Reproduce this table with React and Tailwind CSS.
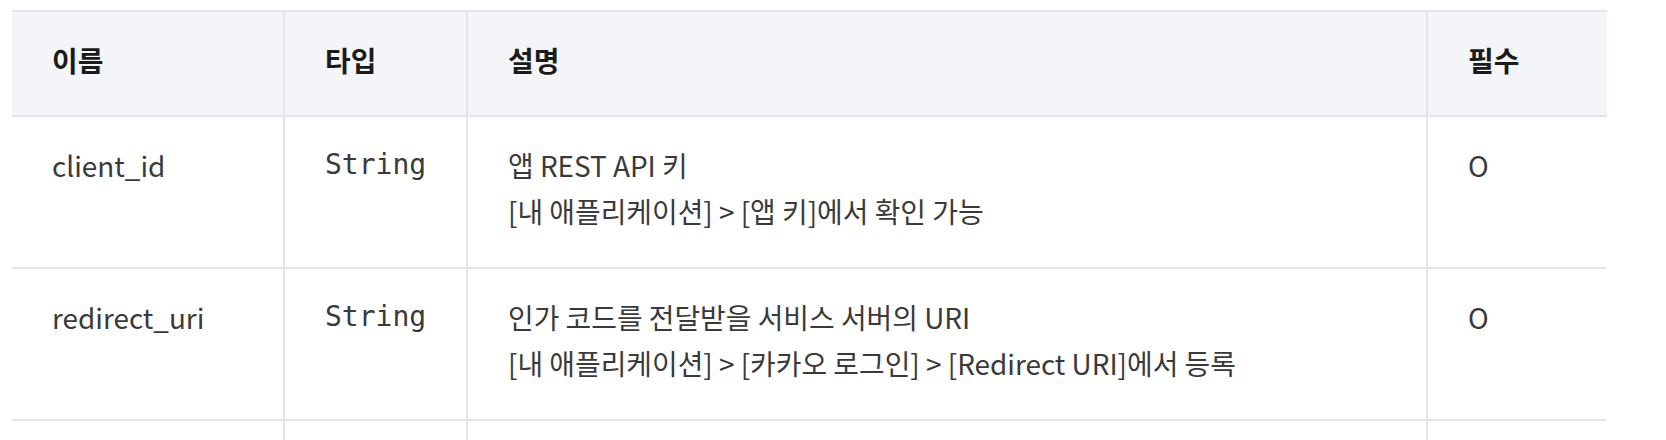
const rows = [
  {
    name: 'client_id',
    type: 'String',
    desc: ['앱 REST API 키', '[내 애플리케이션] > [앱 키]에서 확인 가능'],
    required: 'O',
  },
  {
    name: 'redirect_uri',
    type: 'String',
    desc: ['인가 코드를 전달받을 서비스 서버의 URI', '[내 애플리케이션] > [카카오 로그인] > [Redirect URI]에서 등록'],
    required: 'O',
  },
];

export default function App() {
  return (
    <div className="h-[440px] overflow-hidden bg-white pl-[12px] pt-[10px] font-['Noto_Sans_CJK_KR',sans-serif]">
      <table className="w-[1595px] table-fixed border-collapse text-left text-[27.9px] leading-[46px]">
        <colgroup>
          <col className="w-[272px]" />
          <col className="w-[183px]" />
          <col className="w-[960px]" />
          <col className="w-[180px]" />
        </colgroup>
        <thead>
          <tr className="border-y-2 border-[#e3e5e9] bg-[#f4f5f8]">
            <th className="px-[40px] pt-[25px] pb-[32px] font-bold text-[#1b1b1b]">이름</th>
            <th className="border-l-2 border-[#e3e5e9] px-[40px] pt-[25px] pb-[32px] font-bold text-[#1b1b1b]">타입</th>
            <th className="border-l-2 border-[#e3e5e9] px-[40px] pt-[25px] pb-[32px] font-bold text-[#1b1b1b]">설명</th>
            <th className="border-l-2 border-[#e3e5e9] px-[40px] pt-[25px] pb-[32px] font-bold text-[#1b1b1b]">필수</th>
          </tr>
        </thead>
        <tbody className="text-[#3a3a3a]">
          {rows.map((row) => (
            <tr key={row.name} className="border-b-2 border-[#e3e5e9]">
              <td className="px-[40px] pt-[25px] pb-[33px] align-top">{row.name}</td>
              <td className="border-l-2 border-[#e3e5e9] px-[40px] pt-[25px] pb-[33px] align-top font-['DejaVu_Sans_Mono',monospace] text-[28px]">
                {row.type}
              </td>
              <td className="border-l-2 border-[#e3e5e9] px-[40px] pt-[25px] pb-[33px] align-top">
                {row.desc.map((line) => (
                  <div key={line}>{line}</div>
                ))}
              </td>
              <td className="border-l-2 border-[#e3e5e9] px-[40px] pt-[25px] pb-[33px] align-top">{row.required}</td>
            </tr>
          ))}
          <tr>
            <td className="h-[60px]"></td>
            <td className="h-[60px] border-l-2 border-[#e3e5e9]"></td>
            <td className="h-[60px] border-l-2 border-[#e3e5e9]"></td>
            <td className="h-[60px] border-l-2 border-[#e3e5e9]"></td>
          </tr>
        </tbody>
      </table>
    </div>
  );
}
